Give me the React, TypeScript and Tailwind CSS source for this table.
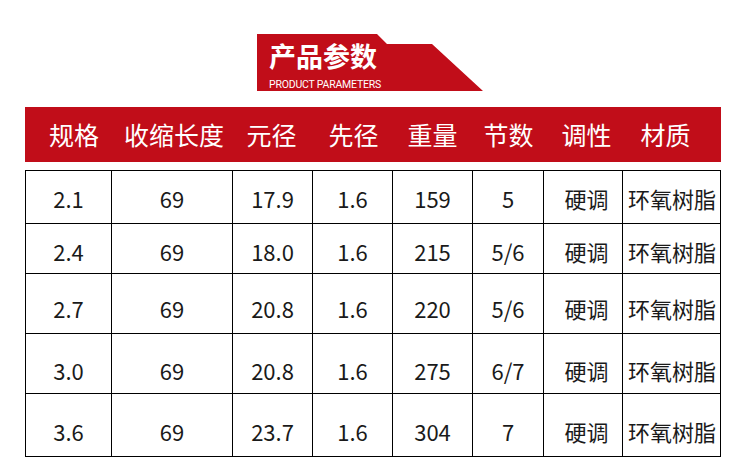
import React from "react";

const rows = [
  { h: "h-[53px]", pt: "pt-[1px]", d: ["2.1", "69", "17.9", "1.6", "159", "5", "硬调", "环氧树脂"] },
  { h: "h-[50px]", pt: "pt-[5px]", d: ["2.4", "69", "18.0", "1.6", "215", "5/6", "硬调", "环氧树脂"] },
  { h: "h-[60px]", pt: "pt-[8px]", d: ["2.7", "69", "20.8", "1.6", "220", "5/6", "硬调", "环氧树脂"] },
  { h: "h-[60px]", pt: "pt-[12px]", d: ["3.0", "69", "20.8", "1.6", "275", "6/7", "硬调", "环氧树脂"] },
  { h: "h-[63px]", pt: "pt-[11px]", d: ["3.6", "69", "23.7", "1.6", "304", "7", "硬调", "环氧树脂"] },
];

const headers = ["规格", "收缩长度", "元径", "先径", "重量", "节数", "调性", "材质"];

const bodyWidths = ["w-[86px]", "w-[121px]", "w-[80px]", "w-[80px]", "w-[80px]", "w-[71px]", "w-[79px]", "w-[98px]"];
const bodyPad = ["", "", "", "", "", "", "pl-[7px]", "pl-[1px]"];

export default function App() {
  return (
    <div
      className="w-[750px] h-[469px] bg-white overflow-hidden flex flex-col"
      style={{ fontFamily: '"Noto Sans CJK SC", "Noto Sans", sans-serif' }}
    >
      {/* Banner */}
      <div className="pt-[34px] pl-[257px]">
        <div className="w-[226px] h-[57px] bg-[#c10d19] [clip-path:polygon(0_0,120px_0,130px_10px,175px_10px,226px_57px,0_57px)] flex flex-col pl-[12px] pt-[2px]">
          <div className="text-white text-[27px] font-bold leading-normal">产品参数</div>
          <div
            className="text-white text-[10.5px] leading-normal tracking-[-0.2px]"
            style={{ fontFamily: '"Roboto", "Liberation Sans", sans-serif' }}
          >
            PRODUCT PARAMETERS
          </div>
        </div>
      </div>

      {/* Header bar */}
      <div className="ml-[25px] mt-[16px] w-[696px] h-[55px] bg-[#c10d19] flex items-center">
        <div className="grid grid-cols-[98px_102px_93px_71px_87px_65px_91px_67px] text-white text-[25px] leading-none">
          {headers.map((h) => (
            <div key={h} className="text-center">
              {h}
            </div>
          ))}
        </div>
      </div>

      {/* Table */}
      <div className="ml-[25px] mt-[8px] w-[696px] border-l border-t border-black flex flex-col">
        {rows.map((r, i) => (
          <div key={i} className={`flex ${r.h}`}>
            {r.d.map((c, j) => (
              <div
                key={j}
                className={`${bodyWidths[j]} ${r.pt} ${bodyPad[j]} border-r border-b border-black flex items-center justify-center text-[22px] text-[#1a1a1a] leading-none`}
              >
                {c}
              </div>
            ))}
          </div>
        ))}
      </div>
    </div>
  );
}
